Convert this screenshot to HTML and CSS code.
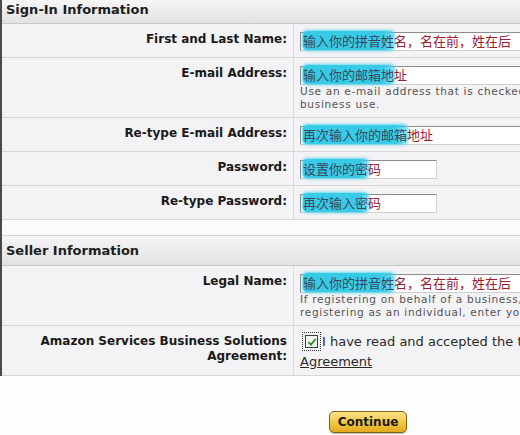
FILE: index.html
```html
<!DOCTYPE html>
<html lang="en">
<head>
<meta charset="utf-8">
<title>Seller Registration</title>
<link rel="stylesheet" href="styles.css">
</head>
<body>
<div class="page">
  <div class="form">
    <div class="section-head first">Sign-In Information</div>
    <div class="row">
      <div class="label">First and Last Name:</div>
      <div class="field">
        <div class="input wide"><span class="hl">输入你的拼音姓</span>名，名在前，姓在后</div>
      </div>
    </div>
    <div class="row">
      <div class="label">E-mail Address:</div>
      <div class="field">
        <div class="input wide"><span class="hl">输入你的邮箱地</span>址</div>
        <p class="help">Use an e-mail address that is checked regularly<br>business use.</p>
      </div>
    </div>
    <div class="row">
      <div class="label">Re-type E-mail Address:</div>
      <div class="field">
        <div class="input wide"><span class="hl">再次输入你的邮箱</span>地址</div>
      </div>
    </div>
    <div class="row">
      <div class="label">Password:</div>
      <div class="field">
        <div class="input short"><span class="hl">设置你的密</span>码</div>
      </div>
    </div>
    <div class="row">
      <div class="label">Re-type Password:</div>
      <div class="field">
        <div class="input short"><span class="hl">再次输入密</span>码</div>
      </div>
    </div>
    <div class="spacer"></div>
    <div class="section-head">Seller Information</div>
    <div class="row">
      <div class="label">Legal Name:</div>
      <div class="field">
        <div class="input wide"><span class="hl">输入你的拼音姓</span>名，名在前，姓在后</div>
        <p class="help">If registering on behalf of a business, enter the<br>registering as an individual, enter your name.</p>
      </div>
    </div>
    <div class="row">
      <div class="label">Amazon Services Business Solutions Agreement:</div>
      <div class="field compact">
        <div class="agree">
          <span class="focus"><span class="checkbox"><svg viewBox="0 0 10 10" width="10" height="10"><path d="M1.5 5.2 L4 7.6 L8.6 2" fill="none" stroke="#2e8b2e" stroke-width="1.8"/></svg></span></span>I have read and accepted the terms of the
        </div>
        <a class="link" href="#">Agreement</a>
      </div>
    </div>
  </div>
  <div class="actions">
    <button class="continue" type="button">Continue</button>
  </div>
</div>
</body>
</html>
```
FILE: styles.css
```css
html, body {
  margin: 0;
  padding: 0;
  background: #fdfdfd;
  overflow: hidden;
}
.page {
  width: 520px;
  height: 435px;
  overflow: hidden;
  font-family: "DejaVu Sans", Verdana, sans-serif;
  color: #1a1a1a;
}
.form {
  border-left: 2px solid #4a4a4a;
}
.section-head {
  height: 29px;
  padding-left: 4px;
  font-weight: bold;
  font-size: 13px;
  line-height: 30px;
  color: #1e1e1e;
  background: linear-gradient(#f6f6f6 0%, #ececec 45%, #e2e2e2 100%);
  border-bottom: 1px solid #c8c8c8;
}
.section-head.first {
  height: 23px;
  line-height: 19px;
}
.row {
  display: grid;
  grid-template-columns: 292px 1fr;
  background: #f3f2f4;
  border-bottom: 1px solid #d6d6d8;
}
.label {
  text-align: right;
  font-weight: bold;
  font-size: 12px;
  line-height: 15px;
  padding: 8px 6px 6px 20px;
  border-right: 1px solid #dcdcde;
}
.field {
  padding: 8px 0 6px 6px;
  min-width: 0;
  overflow: hidden;
}
.field.compact {
  padding-top: 6px;
  padding-bottom: 5px;
}
.input {
  box-sizing: border-box;
  height: 19px;
  background: #fff;
  border: 1px solid #8c8c8c;
  border-right-color: #d0d0d0;
  border-bottom-color: #d0d0d0;
  font-family: "Noto Sans CJK SC", sans-serif;
  font-size: 13px;
  line-height: 16px;
  color: #9a2030;
  padding-left: 2px;
  white-space: nowrap;
}
.input.wide { width: 260px; }
.input.short { width: 137px; }
.hl {
  background: linear-gradient(90deg, #38cbe8 0%, #38cbe8 88%, rgba(56,203,232,0.6) 100%);
  color: #3a4660;
  box-shadow: 0 0 3px 1px #5fd8ee;
  border-radius: 4px;
}
.help {
  margin: 0;
  font-size: 10.5px;
  line-height: 13px;
  letter-spacing: 0.7px;
  color: #555;
  white-space: nowrap;
}
.spacer {
  height: 15px;
  background: #fbfbfb;
  border-bottom: 1px solid #d6d6d8;
}
.agree {
  display: flex;
  align-items: center;
  font-size: 13px;
  line-height: 16px;
  color: #2a2a2a;
  white-space: nowrap;
}
.focus {
  display: inline-flex;
  padding: 2px;
  border: 1px dotted #333;
  margin-left: 2px;
  margin-right: 1px;
}
.checkbox {
  display: inline-flex;
  align-items: center;
  justify-content: center;
  width: 11px;
  height: 11px;
  border: 1px solid #3d3d3d;
  background: #eef3ee;
}
.link {
  display: inline-block;
  font-size: 13px;
  line-height: 16px;
  color: #2a2a2a;
  text-decoration: underline;
}
.actions {
  padding: 35px 0 0 329px;
}
.continue {
  width: 78px;
  height: 22px;
  border: 1px solid #7d6218;
  border-radius: 5px;
  background: linear-gradient(#fbe48a 0%, #f2c94a 50%, #e2a91c 100%);
  font-family: "DejaVu Sans", Verdana, sans-serif;
  font-weight: bold;
  font-size: 12px;
  color: #1e1a10;
  padding: 0;
  box-shadow: 0 1px 1px rgba(0,0,0,0.25);
}
```
